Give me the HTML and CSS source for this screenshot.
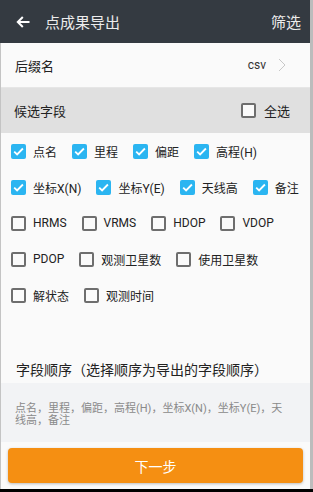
FILE: index.html
```html
<!DOCTYPE html>
<html lang="zh-CN">
<head>
  <meta charset="UTF-8" />
  <meta name="viewport" content="width=device-width, initial-scale=1.0"/>
  <title>点成果导出</title>
  <link rel="stylesheet" href="styles.css">
</head>
<body>

<div class="screen">
  <div class="header">
    <svg class="back" width="14" height="12" viewBox="0 0 14 12">
      <path d="M13.5 6H1.8M6.8 1L1.8 6l5 5" fill="none" stroke="#fff" stroke-width="2"/>
    </svg>
    <div class="title">点成果导出</div>
    <div class="filter">筛选</div>
  </div>

  <div class="content">
    <div class="suffix">
      <span>后缀名</span>
      <span class="value">csv</span>
      <svg class="chevron" width="8" height="14" viewBox="0 0 8 14">
        <path d="M1 1l6 6-6 6" fill="none" stroke="#c8c8c8" stroke-width="1"/>
      </svg>
    </div>

    <div class="section">
      <span>候选字段</span>
      <label class="check all"><span class="box"></span>全选</label>
    </div>

    <div class="fields">
      <div class="row">
        <label class="check on"><span class="box"></span>点名</label>
        <label class="check on"><span class="box"></span>里程</label>
        <label class="check on"><span class="box"></span>偏距</label>
        <label class="check on"><span class="box"></span>高程(H)</label>
      </div>
      <div class="row">
        <label class="check on"><span class="box"></span>坐标X(N)</label>
        <label class="check on"><span class="box"></span>坐标Y(E)</label>
        <label class="check on"><span class="box"></span>天线高</label>
        <label class="check on"><span class="box"></span>备注</label>
      </div>
      <div class="row">
        <label class="check"><span class="box"></span>HRMS</label>
        <label class="check"><span class="box"></span>VRMS</label>
        <label class="check"><span class="box"></span>HDOP</label>
        <label class="check"><span class="box"></span>VDOP</label>
      </div>
      <div class="row">
        <label class="check"><span class="box"></span>PDOP</label>
        <label class="check"><span class="box"></span>观测卫星数</label>
        <label class="check"><span class="box"></span>使用卫星数</label>
      </div>
      <div class="row">
        <label class="check"><span class="box"></span>解状态</label>
        <label class="check"><span class="box"></span>观测时间</label>
      </div>
    </div>

    <div class="order-title">字段顺序（选择顺序为导出的字段顺序）</div>
    <div class="order">点名，里程，偏距，高程(H)，坐标X(N)，坐标Y(E)，天线高，备注</div>

    <div class="actions">
      <button>下一步</button>
    </div>
  </div>
</div>

</body>
</html>
```

FILE: styles.css
```css
body {
  margin: 0;
  padding: 0;
  background: #000;
  font-family: Roboto, "Noto Sans CJK SC", sans-serif;
  color: #222;
}
.screen {
  width: 310px;
  height: 489px;
  border-right: 3px solid #bcbcbc;
  background: #fafafa;
  display: flex;
  flex-direction: column;
}
.header {
  height: 43px;
  background: #343a41;
  color: #ececec;
  display: flex;
  align-items: center;
  padding: 0 9px 0 16px;
  flex-shrink: 0;
}
.back {
  margin-right: 15px;
}
.title {
  font-size: 15px;
  flex: 1;
}
.filter {
  font-size: 15px;
}
.content {
  flex: 1;
  display: flex;
  flex-direction: column;
  border-left: 1px solid #c4c4c4;
}
.suffix {
  height: 44px;
  display: flex;
  align-items: center;
  padding: 0 24px 0 14px;
  font-size: 13px;
  border-bottom: 1px solid #e6e6e6;
}
.suffix span:first-child {
  flex: 1;
}
.suffix .value {
  font-size: 12px;
  color: #333;
  margin-right: 12px;
}
.section {
  height: 45px;
  background: #e0e0e0;
  display: flex;
  align-items: center;
  justify-content: space-between;
  padding: 0 20px 0 13px;
  font-size: 13px;
}
.check {
  display: flex;
  align-items: center;
  gap: 7px;
  font-size: 12px;
  color: #222;
}
.check.all {
  font-size: 13px;
  gap: 8px;
}
.box {
  width: 15px;
  height: 15px;
  box-sizing: border-box;
  border: 2px solid #6e6e6e;
  border-radius: 2px;
  background: #fafafa;
}
.check.on .box {
  border: none;
  background: #2bb5f1 url("data:image/svg+xml,%3Csvg xmlns='http://www.w3.org/2000/svg' width='15' height='15' viewBox='0 0 15 15'%3E%3Cpath d='M3.2 7.6l2.9 2.9 5.8-6' fill='none' stroke='%23fff' stroke-width='1.8'/%3E%3C/svg%3E") no-repeat center;
}
.fields {
  flex: 1;
  padding-left: 10px;
}
.row {
  height: 36px;
  display: flex;
  align-items: center;
  gap: 15px;
}
.order-title {
  font-size: 14px;
  padding: 0 15px;
  line-height: 24px;
  margin-bottom: 1px;
}
.order {
  background: #f2f3f5;
  color: #8a8a8a;
  font-size: 11px;
  line-height: 12px;
  padding: 20px 20px 9px 14px;
  height: 30px;
}
.actions {
  padding: 6px 7px 6px 7px;
}
button {
  width: 100%;
  height: 35px;
  background: #f58f12;
  color: #fff;
  border: none;
  border-radius: 4px;
  font-family: inherit;
  font-size: 14px;
  box-shadow: 0 1px 3px rgba(0,0,0,0.25);
}
```
